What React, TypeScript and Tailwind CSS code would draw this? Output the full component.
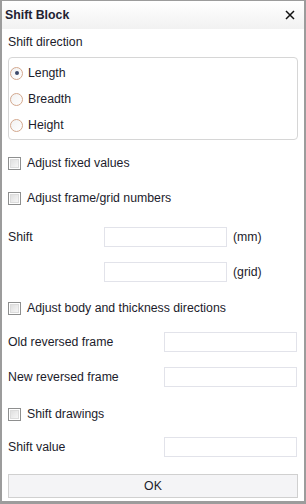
import type { ReactNode } from "react";

const Radio = ({ checked }: { checked?: boolean }) => (
  <span className="relative flex size-[13px] items-center justify-center rounded-full border border-[#d3a88e] bg-gradient-to-br from-[#f2f2f2] to-white">
    {checked ? <span className="size-[4px] rounded-full bg-[#3b4a6b]" /> : null}
  </span>
);

const Checkbox = () => (
  <span className="flex size-[13px] items-center justify-center border border-[#8e8f8f] bg-white">
    <span className="size-[9px] border border-[#dcdcdc] bg-gradient-to-br from-[#e0e0e0] to-[#f6f6f6]" />
  </span>
);

const Input = ({ className }: { className: string }) => (
  <div className={`h-[20px] border border-[#e2e3ea] bg-white ${className}`} />
);

const CheckRow = ({ label, className }: { label: string; className: string }) => (
  <div className={`flex h-[20px] items-center gap-[6px] ${className}`}>
    <Checkbox />
    <span>{label}</span>
  </div>
);

const FieldRow = ({
  label,
  className,
  children,
}: {
  label: string;
  className: string;
  children: ReactNode;
}) => (
  <div className={`flex h-[20px] items-center ${className}`}>
    <span className="w-[156px]">{label}</span>
    {children}
  </div>
);

export default function App() {
  return (
    <div
      className="flex h-[504px] w-[306px] flex-col border-x-2 border-b-[3px] border-t border-[#9c9c9c] bg-white text-[12.3px] text-[#1c1c2c]"
      style={{ fontFamily: '"Liberation Sans", Arial, sans-serif' }}
    >
      <div className="flex h-[28px] items-center justify-between bg-gradient-to-b from-white to-[#f1f1f1] pl-[3px] pr-[9px]">
        <span className="font-bold text-[#222233]">Shift Block</span>
        <svg width="10" height="10" viewBox="0 0 10 10">
          <path d="M1 1 L9 9 M9 1 L1 9" stroke="#111" strokeWidth="1.5" />
        </svg>
      </div>

      <div className="flex flex-col px-[6px]">
        <div className="mt-[3px] flex h-[20px] items-center">Shift direction</div>

        <div className="mt-[5px] flex flex-col rounded-[4px] border border-[#d6d6d6] pb-[1px] pt-[2px]">
          {["Length", "Breadth", "Height"].map((name, i) => (
            <div key={name} className="flex h-[26px] items-center gap-[5px] pl-[1px]">
              <Radio checked={i === 0} />
              <span>{name}</span>
            </div>
          ))}
        </div>

        <CheckRow label="Adjust fixed values" className="mt-[13px]" />
        <CheckRow label="Adjust frame/grid numbers" className="mt-[15px]" />

        <div className="mt-[19px] flex h-[20px] items-center">
          <span className="w-[96px]">Shift</span>
          <Input className="w-[123px]" />
          <span className="ml-[6px]">(mm)</span>
        </div>
        <div className="mt-[15px] flex h-[20px] items-center">
          <span className="w-[96px]" />
          <Input className="w-[123px]" />
          <span className="ml-[6px]">(grid)</span>
        </div>

        <CheckRow label="Adjust body and thickness directions" className="mt-[16px]" />

        <FieldRow label="Old reversed frame" className="mt-[14px]">
          <Input className="w-[133px]" />
        </FieldRow>
        <FieldRow label="New reversed frame" className="mt-[15px]">
          <Input className="w-[133px]" />
        </FieldRow>

        <CheckRow label="Shift drawings" className="mt-[17px]" />

        <FieldRow label="Shift value" className="mt-[13px]">
          <Input className="w-[133px]" />
        </FieldRow>

        <button className="mt-[17px] flex h-[24px] w-[290px] items-center justify-center border border-[#d0d0d0] bg-[#f4f4f6]">
          OK
        </button>
      </div>
    </div>
  );
}
